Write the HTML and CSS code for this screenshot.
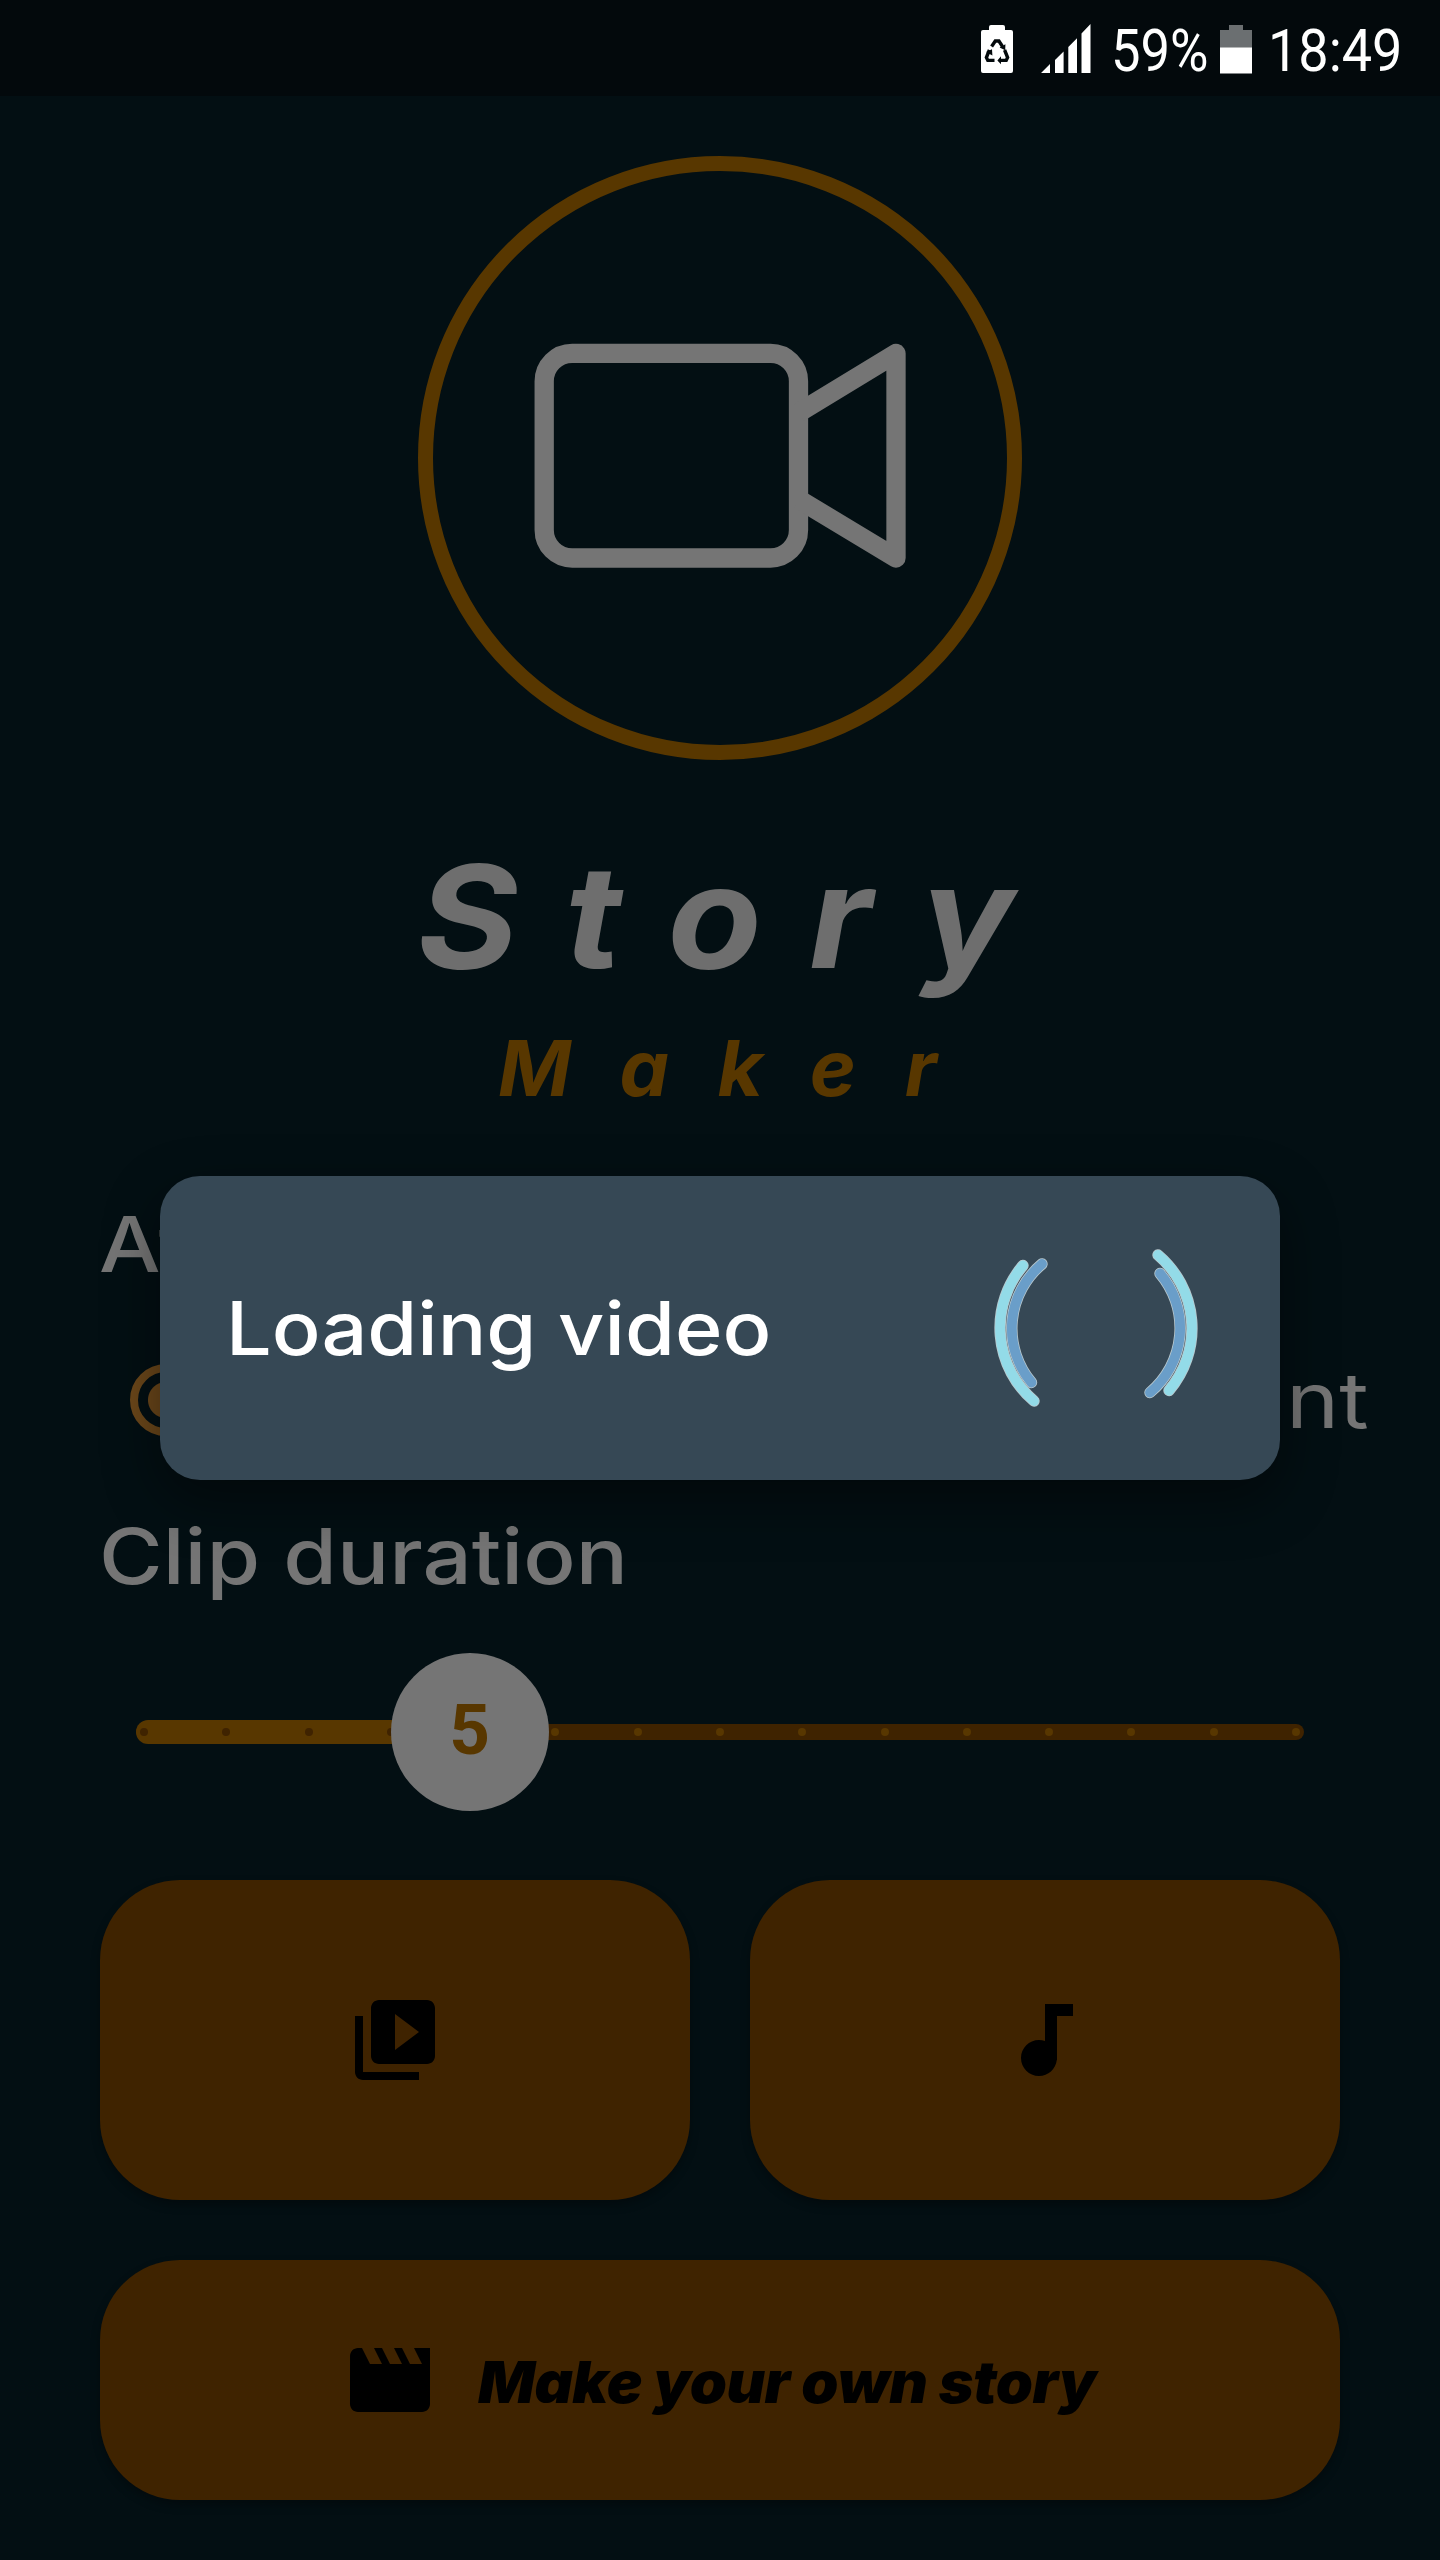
FILE: index.html
```html
<!DOCTYPE html>
<html lang="en">
<head>
<meta charset="utf-8">
<title>Story Maker</title>
<link rel="stylesheet" href="styles.css">
</head>
<body>
<header class="status">
  <svg class="status-saver" width="32" height="48" viewBox="0 0 32 48">
    <path fill="#fff" d="M8 5V2q0-2 2-2h12q2 0 2 2v3h6q2 0 2 2v39q0 2-2 2H2q-2 0-2-2V7q0-2 2-2z"/>
    <g fill="none" stroke="#03090c" stroke-width="3.4">
      <path d="M10.600 21.500L14.300 16h3.600l3.600 5.500"/>
      <path d="M8.400 25L5.400 32.500l1.400 2.900H13.500"/>
      <path d="M23.600 25l3 7.500-1.400 2.900H18.500"/>
    </g>
    <path fill="#03090c" d="M18.600 22.600l5.800-3.400-.2 6zM5 27l6-2.800.4 6.400zM20 31.200v8L16.400 35.600z"/>
  </svg>
  <svg class="status-signal" width="50" height="49" viewBox="0 0 50 49" fill="#fff">
    <path d="M0 49l9-9v9zM14 49V36l8.600-8.600V49zM27.300 49V23l8.700-8.700V49zM40.500 49V9.500L49.500 0v49z"/>
  </svg>
  <span class="status-percent">59%</span>
  <svg class="status-battery" width="32" height="49" viewBox="0 0 32 49">
    <path fill="#6b6f71" d="M0 5h9V0h14v5h9v18H0z"/>
    <path fill="#fff" d="M0 22.500h32v26H0z"/>
  </svg>
  <span class="status-clock">18:49</span>
</header>

<main class="screen">
  <svg class="logo" width="604" height="604" viewBox="0 0 604 604" fill="none">
    <circle cx="302" cy="302" r="294.500" stroke="#583700" stroke-width="15"/>
    <g stroke="#757575" stroke-width="19.300" stroke-linejoin="round">
      <rect x="126.200" y="197.300" width="254.300" height="204.700" rx="28"/>
      <path d="M381 256.500L478 197.500V402L381 343.500"/>
    </g>
  </svg>
  <h1 class="title">Story</h1>
  <p class="subtitle">Maker</p>

  <h2 class="label label-mode"><span class="label-text">At</span></h2>
  <div class="options">
    <span class="radio"></span>
    <span class="option-text">nt</span>
  </div>

  <h2 class="label label-duration"><span class="label-text">Clip duration</span></h2>
  <div class="slider">
    <div class="track"></div>
    <div class="track-active"></div>
    <div class="ticks">
      <i class="tick tick-on"></i><i class="tick tick-on"></i><i class="tick tick-on"></i><i class="tick tick-on"></i><i class="tick"></i><i class="tick"></i><i class="tick"></i><i class="tick"></i><i class="tick"></i><i class="tick"></i><i class="tick"></i><i class="tick"></i><i class="tick"></i><i class="tick"></i><i class="tick"></i>
    </div>
    <div class="thumb">5</div>
  </div>

  <div class="actions">
    <button class="action">
      <svg class="icon" viewBox="0 0 24 24"><path d="M4 6H2v14c0 1.100.9 2 2 2h14v-2H4V6zm16-4H8c-1.100 0-2 .9-2 2v12c0 1.100.9 2 2 2h12c1.100 0 2-.9 2-2V4c0-1.100-.9-2-2-2zm-8 12.500v-9l6 4.500-6 4.500z"/></svg>
    </button>
    <button class="action">
      <svg class="icon" viewBox="0 0 24 24"><path d="M12 3v9.280c-.47-.17-.97-.28-1.500-.28C8.010 12 6 14.010 6 16.500S8.010 21 10.500 21c2.310 0 4.200-1.750 4.450-4H15V6h4V3h-7z"/></svg>
    </button>
    <button class="action action-wide">
      <svg class="icon" viewBox="0 0 24 24"><path d="M18 4l2 4h-3l-2-4h-2l2 4h-3l-2-4H8l2 4H7L5 4H4c-1.100 0-1.990.9-1.990 2L2 18c0 1.100.9 2 2 2h16c1.100 0 2-.9 2-2V4h-4z"/></svg>
      <span class="action-text">Make your own story</span>
    </button>
  </div>
</main>

<div class="dialog" role="dialog">
  <span class="dialog-text">Loading video</span>
  <svg class="spinner" width="204" height="204" viewBox="-102 -102 204 204" fill="none" stroke-linecap="round">
    <g stroke="#e4f3f6" stroke-width="11.400" opacity=".75">
      <path d="M-73-62.500A96 96 0 0 0-62 73M62-73A96 96 0 0 1 73 62.500"/>
      <path d="M-54-64A84 84 0 0 0-64.500 54.500M64-54.500A84 84 0 0 1 54 64.500"/>
    </g>
    <path stroke="#93dbe8" stroke-width="9.800" d="M-73-62.500A96 96 0 0 0-62 73M62-73A96 96 0 0 1 73 62.500"/>
    <path stroke="#6a9ec9" stroke-width="9.800" d="M-54-64A84 84 0 0 0-64.500 54.500M64-54.500A84 84 0 0 1 54 64.500"/>
  </svg>
</div>
</body>
</html>
```
FILE: styles.css
```css
* { box-sizing: border-box; }

body {
  margin: 0;
  width: 1440px;
  height: 2560px;
  overflow: hidden;
  position: relative;
  background: #030f13;
  color: #757575;
  font-family: Inter, "Liberation Sans", sans-serif;
}

/* status bar */
.status {
  display: flex;
  height: 96px;
  padding: 24px 0 0 981px;
  background: #03090c;
  color: #fff;
  font: 400 60px/48px Roboto, sans-serif;
  white-space: nowrap;
}
.status svg { flex: none; }
.status-saver { margin: 1px 28px 0 0; }
.status-signal { margin-right: 20px; }
.status-percent, .status-clock {
  flex: none;
  transform-origin: left;
  line-height: 54px;
}
.status-percent { width: 109px; transform: scaleX(.875); }
.status-battery { margin: 1px 16px 0 0; }
.status-clock { width: 140px; transform: scaleX(.9); }

/* page column */
.screen {
  display: flex;
  flex-direction: column;
  padding: 60px 100px 0;
}
.logo { flex: none; align-self: center; }

.title, .subtitle {
  margin: 0;
  font-style: italic;
  font-weight: 700;
  white-space: nowrap;
  font-feature-settings: "cv11";
}
.title {
  margin: 76px 0 0 317px;
  font-size: 143px;
  line-height: 160px;
  letter-spacing: 43.500px;
  color: #6e6e6e;
  transform-origin: left;
  transform: scaleX(1.08);
}
.subtitle {
  margin: 22px 0 0 398px;
  font-size: 77px;
  line-height: 100px;
  letter-spacing: 47.500px;
  color: #583700;
  transform-origin: left;
  transform: scaleX(1.02);
}

.label {
  margin: 0;
  font-size: 77px;
  font-weight: 450;
  line-height: 96px;
  white-space: nowrap;
}
.label-mode { margin-top: 78px; }
.label-duration { margin-top: 60px; }
.label-text { display: inline-block; margin-left: -1px; transform-origin: left; transform: scaleX(1.128); }

.options {
  display: flex;
  align-items: center;
  justify-content: space-between;
  height: 96px;
  margin-top: 60px;
  padding-left: 30px;
  margin-right: -29px;
}
.radio {
  width: 72px;
  height: 72px;
  border: 8px solid #6b471a;
  border-radius: 50%;
  background: radial-gradient(circle, #6b471a 17.500px, transparent 18.500px);
}
.option-text { font-size: 77px; line-height: 96px; transform-origin: right; transform: scaleX(1.17); }

/* duration slider: every layer shares one grid cell */
.slider {
  display: grid;
  align-items: center;
  height: 160px;
  margin: 48px 36px 0;
}
.slider > * { grid-area: 1 / 1; }
.track { height: 16px; border-radius: 8px; background: #3f2300; }
.track-active { width: 330px; height: 24px; border-radius: 12px 0 0 12px; background: #583700; }
.ticks { display: flex; justify-content: space-between; padding: 0 4px; }
.tick { width: 8px; height: 8px; border-radius: 50%; background: #583700; }
.tick-on { background: #3f2300; }
.thumb {
  width: 158px;
  height: 158px;
  margin-left: 254.500px;
  border-radius: 50%;
  background: #757575;
  color: #583700;
  font: 700 71px/154px Roboto, sans-serif;
  text-align: center;
}

/* buttons */
.actions {
  display: grid;
  grid-template: 320px 240px / 1fr 1fr;
  gap: 60px;
  margin-top: 68px;
}
.action {
  display: flex;
  align-items: center;
  justify-content: center;
  padding: 0;
  border: 0;
  border-radius: 80px;
  background: #3f2300;
  color: #000;
  box-shadow: 0 5px 10px rgba(0, 0, 0, .3);
}
.action-wide { grid-column: 1 / 3; justify-content: flex-start; padding-left: 242px; gap: 40px; }
.icon { flex: none; width: 96px; height: 96px; fill: #000; }
.action-text {
  padding-top: 4px;
  font: italic 900 58px/80px Inter, sans-serif;
  font-feature-settings: "cv11";
  letter-spacing: -.5px;
  white-space: nowrap;
  transform-origin: left;
  transform: scaleX(1.027);
}

/* loading dialog */
.dialog {
  position: absolute;
  left: 160px;
  top: 1176px;
  display: flex;
  align-items: center;
  justify-content: space-between;
  width: 1120px;
  height: 304px;
  padding: 0 82px 0 66px;
  border-radius: 40px;
  background: #364855;
  box-shadow: 0 20px 56px rgba(0, 0, 0, .45);
}
.dialog-text {
  color: #fff;
  font-size: 74px;
  font-weight: 500;
  line-height: 96px;
  white-space: nowrap;
  transform-origin: left;
  transform: scaleX(1.093);
}
.spinner { flex: none; }
```
